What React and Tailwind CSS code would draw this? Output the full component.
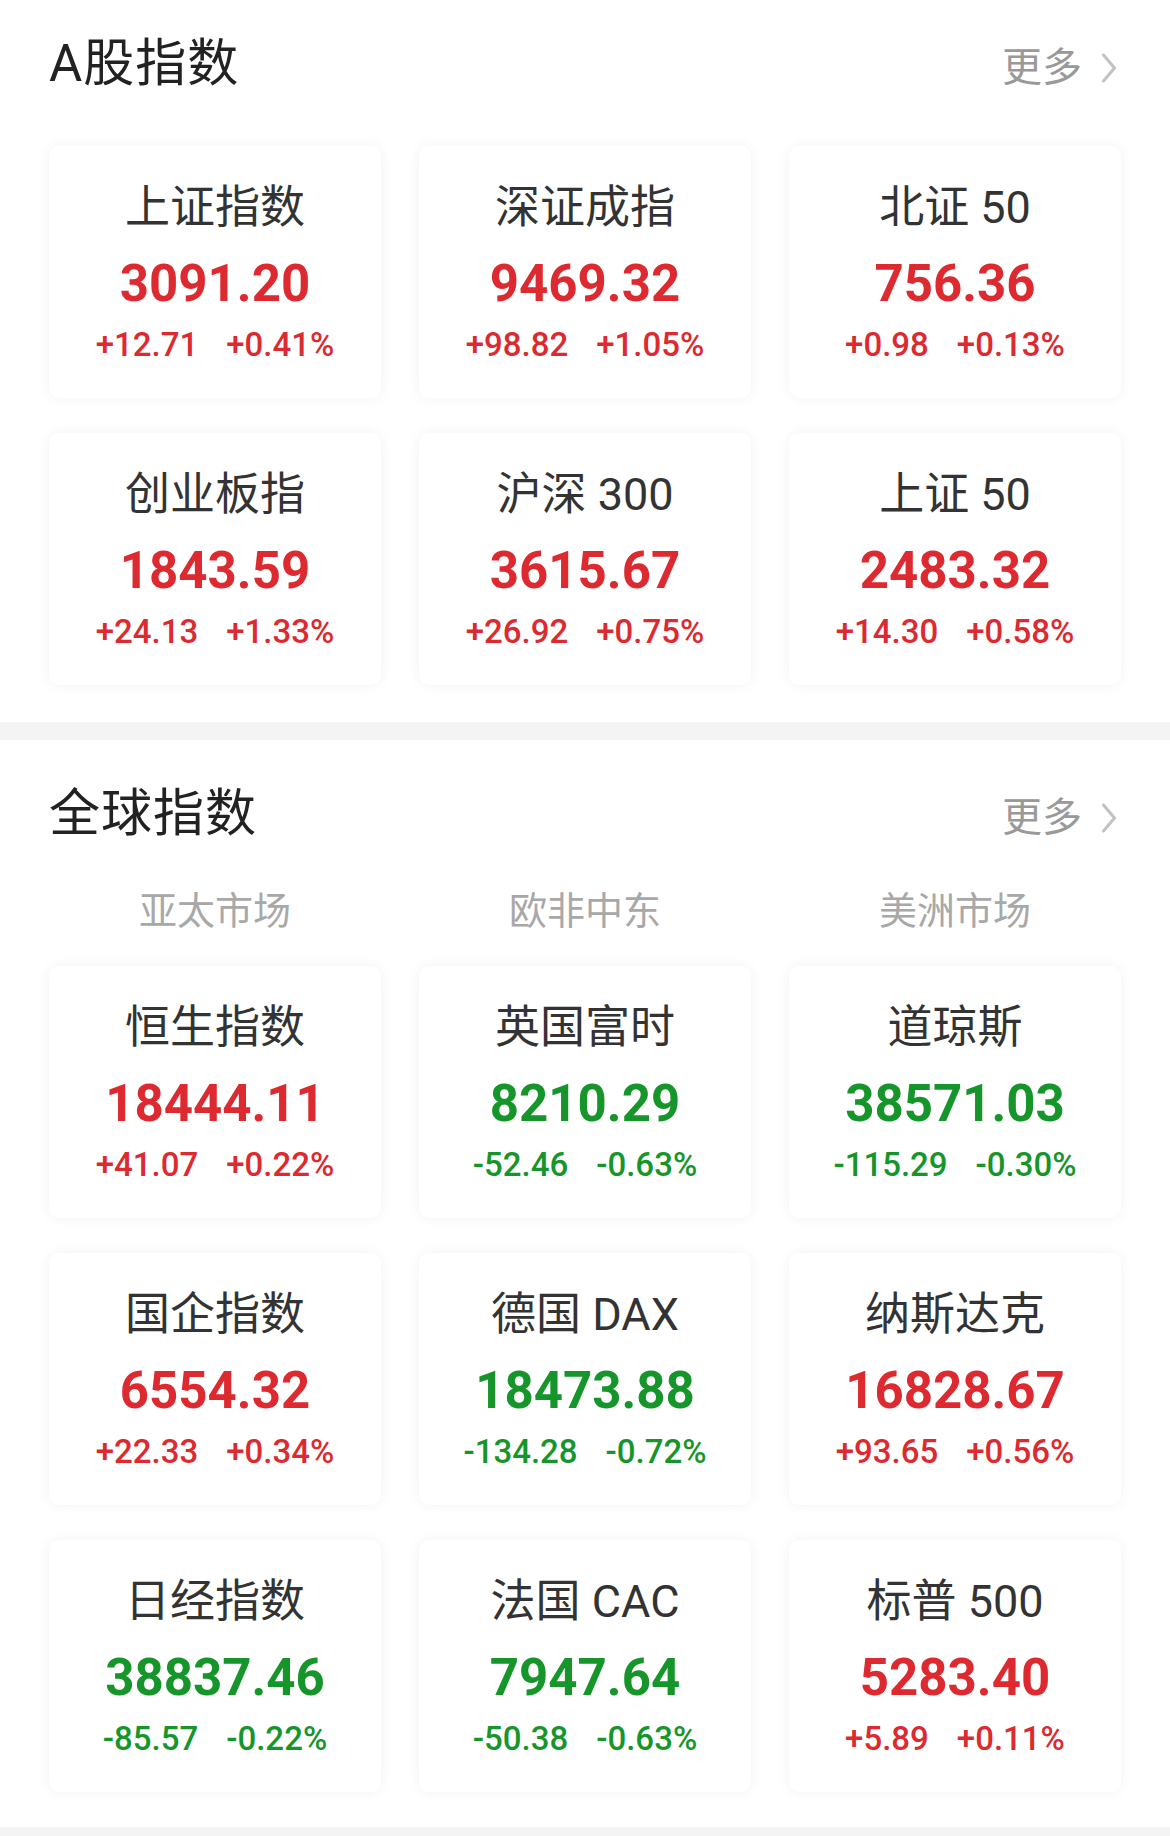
const RED = 'text-[#dc2a30]';
const GREEN = 'text-[#16962a]';

const aShares = [
  { name: '上证指数', value: '3091.20', chg: '+12.71', pct: '+0.41%', up: true },
  { name: '深证成指', value: '9469.32', chg: '+98.82', pct: '+1.05%', up: true },
  { name: '北证 50', value: '756.36', chg: '+0.98', pct: '+0.13%', up: true },
  { name: '创业板指', value: '1843.59', chg: '+24.13', pct: '+1.33%', up: true },
  { name: '沪深 300', value: '3615.67', chg: '+26.92', pct: '+0.75%', up: true },
  { name: '上证 50', value: '2483.32', chg: '+14.30', pct: '+0.58%', up: true },
];

const globalIdx = [
  { name: '恒生指数', value: '18444.11', chg: '+41.07', pct: '+0.22%', up: true },
  { name: '英国富时', value: '8210.29', chg: '-52.46', pct: '-0.63%', up: false },
  { name: '道琼斯', value: '38571.03', chg: '-115.29', pct: '-0.30%', up: false },
  { name: '国企指数', value: '6554.32', chg: '+22.33', pct: '+0.34%', up: true },
  { name: '德国 DAX', value: '18473.88', chg: '-134.28', pct: '-0.72%', up: false },
  { name: '纳斯达克', value: '16828.67', chg: '+93.65', pct: '+0.56%', up: true },
  { name: '日经指数', value: '38837.46', chg: '-85.57', pct: '-0.22%', up: false },
  { name: '法国 CAC', value: '7947.64', chg: '-50.38', pct: '-0.63%', up: false },
  { name: '标普 500', value: '5283.40', chg: '+5.89', pct: '+0.11%', up: true },
];

const Chevron = () => (
  <svg width="18" height="34" viewBox="0 0 18 34" fill="none">
    <path d="M3.5 4 L14.5 17 L3.5 30" stroke="#c2c2c2" strokeWidth="3" strokeLinecap="round" strokeLinejoin="round" />
  </svg>
);

const SectionHeader = ({ title, height }) => (
  <div className={`flex items-center justify-between ${height}`}>
    <h2 className="text-[51px] leading-[56px] text-[#222] font-normal tracking-[1px]">{title}</h2>
    <div className="flex items-center gap-[18px] pr-[3px] pt-[8px]">
      <span className="text-[40px] leading-[44px] text-[#999]">更多</span>
      <Chevron />
    </div>
  </div>
);

const IndexCard = ({ item }) => {
  const color = item.up ? RED : GREEN;
  return (
    <div className="h-[252px] rounded-[10px] bg-white shadow-[0_0_14px_rgba(0,0,0,0.055)] flex flex-col items-center pt-[40px]">
      <div className="text-[45px] leading-[44px] text-[#333] whitespace-nowrap">{item.name}</div>
      <div className={`mt-[26px] text-[51px] leading-[56px] font-bold ${color}`}>{item.value}</div>
      <div className={`mt-[15px] flex gap-[28px] text-[33px] leading-[36px] font-medium ${color}`}>
        <span>{item.chg}</span>
        <span>{item.pct}</span>
      </div>
    </div>
  );
};

const Grid = ({ items }) => (
  <div className="grid grid-cols-3 gap-x-[38px] gap-y-[35px]">
    {items.map((it) => <IndexCard key={it.name} item={it} />)}
  </div>
);

export default function App() {
  return (
    <div className="w-[1170px] bg-white" style={{ fontFamily: 'Roboto, "Noto Sans CJK SC", sans-serif' }}>
      {/* A股指数 */}
      <section className="px-[49px] pb-[37px]">
        <SectionHeader title="A股指数" height="h-[128px]" />
        <div className="pt-[18px]">
          <Grid items={aShares} />
        </div>
      </section>

      <div className="h-[18px] bg-[#f4f4f4]" />

      {/* 全球指数 */}
      <section className="px-[49px] pb-[35px]">
        <SectionHeader title="全球指数" height="h-[148px]" />
        <div className="grid grid-cols-3 gap-x-[38px] h-[46px] items-center">
          {['亚太市场', '欧非中东', '美洲市场'].map((t) => (
            <div key={t} className="text-center text-[38px] leading-[46px] text-[#a8a8a8]">{t}</div>
          ))}
        </div>
        <div className="mt-[32px]">
          <Grid items={globalIdx} />
        </div>
      </section>

      <div className="h-[10px] bg-[#f4f4f4]" />
    </div>
  );
}
